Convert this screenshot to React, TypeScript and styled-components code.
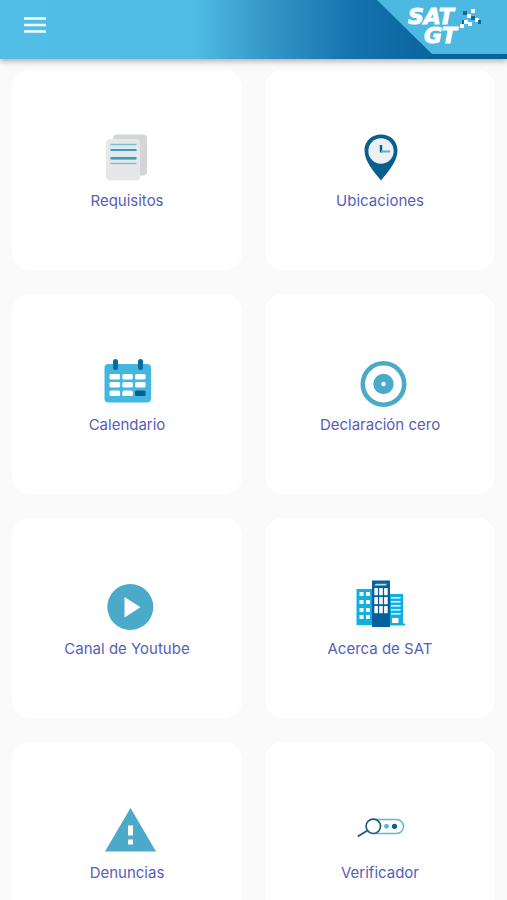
import React from "react";
import styled, { createGlobalStyle } from "styled-components";

const GlobalStyle = createGlobalStyle`
  *, *::before, *::after { box-sizing: border-box; }
  body {
    margin: 0;
    background: #fafafa;
    font-family: Inter, Roboto, "Liberation Sans", sans-serif;
  }
`;

const Page = styled.div`
  min-height: 100vh;
  overflow-x: hidden;
`;

const Header = styled.header`
  display: flex;
  justify-content: space-between;
  height: 59px;
  background: linear-gradient(90deg, #52bde6 0%, #50bce5 38%, #3598c9 52%, #1472ac 70%, #0b669f 84%);
  box-shadow: 0 2px 6px rgba(60, 40, 30, 0.4);
`;

const MenuButton = styled.button`
  display: flex;
  align-items: center;
  justify-content: center;
  width: 48px;
  height: 50px;
  margin-left: 11px;
  padding: 0;
  border: 0;
  background: transparent;
  cursor: pointer;
`;

const Brand = styled.svg`
  display: block;
  width: 130px;
  height: 59px;
  flex: none;
`;

const BrandText = styled.text`
  fill: #fff;
  stroke: #fff;
  stroke-width: 1px;
  font-family: "DejaVu Sans", sans-serif;
  font-size: 22px;
  font-weight: 700;
  font-style: italic;
`;

const Grid = styled.main`
  display: grid;
  grid-template-columns: 1fr 1fr;
  gap: 24px 23px;
  padding: 11px 12px 24px;
`;

const Card = styled.a`
  display: flex;
  flex-direction: column;
  align-items: center;
  gap: 7px;
  min-height: 200px;
  padding: 64px 8px 48px;
  border-radius: 18px;
  background: #fff;
  color: #5560b8;
  text-decoration: none;
`;

const Icon = styled.svg`
  display: block;
  width: 56px;
  height: 48px;
  overflow: visible;
`;

const Label = styled.span`
  font-size: 15px;
  line-height: 24px;
  text-align: center;
`;

const TEAL = "#4ba9c9";
const NAVY = "#075f8f";
const SKY = "#43b7df";

const Documents = () => (
  <Icon viewBox="0 0 56 48" aria-hidden="true">
    <rect x="14" y="0.5" width="34" height="41" rx="4" fill="#d4d5d6" />
    <rect x="7" y="5" width="34" height="41.5" rx="4" fill="#e6e7e8" />
    <g stroke="#329fc4">
      <path d="M11.5 10.5h26" stroke="#77bfd0" strokeWidth="1.4" />
      <path d="M11.5 16h26" strokeWidth="2" />
      <path d="M11.5 24.3h26" strokeWidth="2.6" />
      <path d="M11.5 29.5h26" stroke="#77bfd0" strokeWidth="1.4" />
    </g>
  </Icon>
);

const Pin = () => (
  <Icon viewBox="0 0 56 48" aria-hidden="true">
    <path d="M29 0.5C19.6 0.5 12.5 7 12.5 16.3C12.5 27 21 37 29 46.5C37 37 45.5 27 45.5 16.3C45.5 7 38.4 0.5 29 0.5Z" fill={NAVY} />
    <circle cx="29" cy="17" r="12.7" fill="#edf0f2" />
    <path d="M29 11v7.5" stroke={NAVY} strokeWidth="2.4" />
    <path d="M29 17.5h9" stroke={SKY} strokeWidth="2" />
  </Icon>
);

const Calendar = () => (
  <Icon viewBox="0 0 56 48" aria-hidden="true">
    <rect x="5.5" y="6" width="46.5" height="38.5" rx="4" fill={SKY} />
    <path d="M16.5 3.5v6M41.5 3.5v6" stroke="#086aa3" strokeWidth="5" strokeLinecap="round" />
    {[16, 24, 32.5].map((y, row) =>
      [10.5, 23.3, 36].map((x, col) => (
        <rect key={x + "-" + y} x={x} y={y} width="10.6" height="5.4" rx="1.5" fill={row === 2 && col === 2 ? NAVY : "#fff"} />
      ))
    )}
  </Icon>
);

const Target = () => (
  <Icon viewBox="0 0 56 48" aria-hidden="true">
    <circle cx="31.5" cy="26" r="20.7" fill="none" stroke={TEAL} strokeWidth="4.6" />
    <circle cx="31.5" cy="26" r="6.2" fill="none" stroke={TEAL} strokeWidth="8" />
  </Icon>
);

const Play = () => (
  <Icon viewBox="0 0 56 48" aria-hidden="true">
    <circle cx="31.3" cy="25" r="23" fill={TEAL} />
    <path d="M25.5 15v20.5l16-10.3z" fill="#fff" />
  </Icon>
);

const Buildings = () => (
  <Icon viewBox="0 0 56 48" aria-hidden="true">
    <path d="M4.5 7H20v36H4.5zM38 12h13v29.5h2v2H38z" fill="#10b1e0" />
    <g fill="#fff">
      {[10, 18, 26, 33].map((y) =>
        [7.5, 14].map((x) => <rect key={x + "-" + y} x={x} y={y} width="4" height="4" />)
      )}
      {[15, 19, 23, 27, 31].map((y) => (
        <rect key={y} x="39" y={y} width="9.5" height="1.5" />
      ))}
      <rect x="40" y="36" width="6.5" height="5" />
    </g>
    <rect x="20" y="-1.5" width="18" height="46.5" fill="#075f9c" />
    <path d="M22 3.5l2-1.7h11l-1 1.7z" fill="#b5dced" />
    <g fill="#fff">
      {[6, 15, 24].map((y) =>
        [22.3, 27.2, 32.1].map((x) => <rect key={x + "-" + y} x={x} y={y} width="3.6" height="7.3" rx="0.5" />)
      )}
    </g>
  </Icon>
);

const Warning = () => (
  <Icon viewBox="0 0 56 48" aria-hidden="true">
    <path d="M31.5 2L57 45.5H6z" fill={TEAL} />
    <path d="M29 19.5h5v10h-5zM29 33.5h5v5h-5z" fill="#fff" />
  </Icon>
);

const Verifier = () => (
  <Icon viewBox="0 0 56 48" aria-hidden="true">
    <path d="M21 13.5h23.5a7 7 0 0 1 0 14H21" fill="none" stroke="#61b7da" strokeWidth="1.6" />
    <circle cx="34.5" cy="20.3" r="2.4" fill="#55b5da" />
    <circle cx="42.5" cy="20.3" r="2.6" fill={NAVY} />
    <circle cx="21.3" cy="20.3" r="7.2" fill="#fff" stroke="#205e83" strokeWidth="1.7" />
    <path d="M15.5 24.5L6.5 30" stroke="#205e83" strokeWidth="2" strokeLinecap="round" />
  </Icon>
);

const items = [
  { label: "Requisitos", href: "#requisitos", Drawing: Documents },
  { label: "Ubicaciones", href: "#ubicaciones", Drawing: Pin },
  { label: "Calendario", href: "#calendario", Drawing: Calendar },
  { label: "Declaración cero", href: "#declaracion-cero", Drawing: Target },
  { label: "Canal de Youtube", href: "#canal", Drawing: Play },
  { label: "Acerca de SAT", href: "#acerca", Drawing: Buildings },
  { label: "Denuncias", href: "#denuncias", Drawing: Warning },
  { label: "Verificador", href: "#verificador", Drawing: Verifier },
];

export default function App() {
  return (
    <Page>
      <GlobalStyle />
      <Header>
        <MenuButton type="button" aria-label="Menú">
          <svg width="22" height="16" viewBox="0 0 22 16" aria-hidden="true">
            <path d="M0 1.5h22M0 8h22M0 14.5h22" stroke="#f4fdff" strokeWidth="2.6" />
          </svg>
        </MenuButton>
        <Brand viewBox="0 0 130 59" role="img" aria-label="SAT GT">
          <path d="M0 0H130V54H55Z" fill="#4db8e1" />
          <path d="M55 54H130V59H50Z" fill="#086397" />
          <BrandText x="31" y="24">SAT</BrandText>
          <BrandText x="47" y="43">GT</BrandText>
          <g fill="#fff">
            <path d="M94 9h4v4h-4zM90 14h4v4h-4zM98 18h4v4h-4zM87 20h4v4h-4zM91 22h4v4h-4zM83 24h4v4h-4z" />
          </g>
          <path d="M86 11h4v4h-4zM94 16h4v4h-4zM101 20h3v4h-3zM85 20h2v4h-2z" fill="#126a98" />
        </Brand>
      </Header>
      <Grid>
        {items.map(({ label, href, Drawing }) => (
          <Card key={label} href={href}>
            <Drawing />
            <Label>{label}</Label>
          </Card>
        ))}
      </Grid>
    </Page>
  );
}
